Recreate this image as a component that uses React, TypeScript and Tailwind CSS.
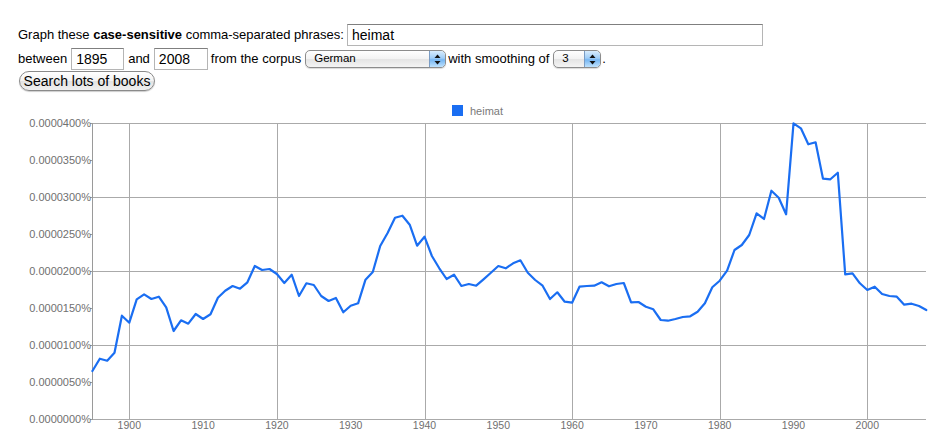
import React from "react";

const ys: number[] = [
  371, 358.7, 360.7, 352.7, 315.7, 322.7, 299.3, 294.3, 299, 296.7,
  307.3, 331, 320.3, 323.7, 314, 319, 314.3, 297.7, 290.7, 286,
  288.7, 282.3, 266, 270, 269, 274, 283, 274.7, 296, 283.3,
  285, 296, 301, 298, 312.3, 305.7, 303.3, 279.7, 272, 246,
  233, 217.7, 215.7, 224.7, 245.7, 236.7, 256, 268.3, 279, 274.7,
  286, 284, 285.7, 279.3, 272.7, 266, 268.3, 263.3, 260.3, 272.7,
  280, 285.7, 299, 292.3, 301.7, 302.7, 286.7, 286, 285.7, 282.3,
  286.3, 284, 283, 302.3, 302, 306.7, 309.3, 320, 320.7, 319,
  317, 316.3, 311.7, 303.3, 287.3, 280.7, 270.7, 250, 245, 235,
  213.3, 219, 190.7, 197.7, 214.3, 123.3, 128.3, 144.3, 142.3, 178.7,
  179.3, 172.7, 274.3, 273.3, 283.3, 290, 286.7, 294, 296, 296.7,
  304.7, 303.7, 306, 310,
];

const X0 = 92.4;
const PX = 7.38;
const xOf = (yr: number) => X0 + (yr - 1895) * PX;
const LEFT = 92;
const RIGHT = 926;
const TOP = 123;
const BOTTOM = 419;

function Arrows() {
  return (
    <div className="flex h-full w-[16px] items-center justify-center rounded-r-[4px] border-l border-[#7a9cc4] bg-[linear-gradient(#d8ecfd,#9fcdf7_45%,#76b6f2_55%,#bfe2fd)]">
      <svg width="7" height="11" viewBox="0 0 7 11">
        <polygon points="3.5,0.5 6.5,4 0.5,4" fill="#111" />
        <polygon points="0.5,7 6.5,7 3.5,10.5" fill="#111" />
      </svg>
    </div>
  );
}

function Select({ value, width }: { value: string; width: number }) {
  return (
    <div
      className="flex h-[18px] shrink-0 items-stretch overflow-hidden rounded-[5px] border border-[#8c8c8c] bg-[linear-gradient(#ffffff,#f3f3f3_50%,#e4e4e4_51%,#f4f4f4)] shadow-[0_1px_1px_rgba(0,0,0,0.15)]"
      style={{ width }}
    >
      <div className="flex flex-1 items-center pl-[8px] text-[11.5px] leading-none text-black">{value}</div>
      <Arrows />
    </div>
  );
}

export default function App() {
  const pts = ys.map((y, i) => `${xOf(1895 + i).toFixed(1)},${y}`).join(" ");
  const hGrid = [123, 197, 271, 345, 419];
  const yLabels = [
    "0.0000400%", "0.0000350%", "0.0000300%", "0.0000250%", "0.0000200%",
    "0.0000150%", "0.0000100%", "0.0000050%", "0.0000000%",
  ];
  const vGrid = [1900, 1920, 1940, 1960, 1980, 2000];
  const xLabels = [1900, 1910, 1920, 1930, 1940, 1950, 1960, 1970, 1980, 1990, 2000];

  return (
    <div className="h-[439px] w-[950px] overflow-hidden bg-white font-['Liberation_Sans',Arial,sans-serif] text-[13px] text-black">
      <div className="flex flex-col pl-[18px] pt-[24px]">
        <div className="flex h-[22px] items-center gap-[4px] whitespace-nowrap">
          <span className="w-[325px] shrink-0">
            Graph these <b>case-sensitive</b> comma-separated phrases:
          </span>
          <div className="flex h-[22px] w-[416px] shrink-0 items-center border border-[#b5b5b5] border-t-[#7f7f7f] pl-[4px] text-[14px]">
            heimat
          </div>
        </div>
        <div className="mt-[2px] flex h-[22px] items-center gap-[4px] whitespace-nowrap">
          <span>between</span>
          <div className="flex h-[22px] w-[53px] shrink-0 items-center border border-[#b5b5b5] border-t-[#7f7f7f] pl-[4px] text-[14px]">
            1895
          </div>
          <span>and</span>
          <div className="flex h-[22px] w-[54px] shrink-0 items-center border border-[#b5b5b5] border-t-[#7f7f7f] pl-[4px] text-[14px]">
            2008
          </div>
          <span className="-ml-[1px]">from the corpus</span>
          <Select value="German" width={141} />
          <span className="-ml-[2px]">with smoothing of</span>
          <Select value="3" width={48} />
          <span className="-ml-[3px]">.</span>
        </div>
        <div className="mt-[1px] flex">
          <div className="ml-[1px] flex h-[20px] w-[136px] items-center justify-center rounded-full border border-[#8a8a8a] bg-[linear-gradient(#ffffff,#f2f2f2_50%,#e2e2e2_51%,#f0f0f0)] text-[14px] shadow-[0_1px_1px_rgba(0,0,0,0.2)]">
            Search lots of books
          </div>
        </div>
      </div>

      <svg
        className="mt-[4px] block"
        width="950"
        height="344"
        viewBox="0 95 950 344"
        fontFamily="'Liberation Sans', Arial, sans-serif"
      >
        <rect x="452" y="105" width="11" height="11" fill="#1a6ef2" />
        <text x="470" y="114.5" fontSize="11" fill="#7a7a7a">heimat</text>

        {hGrid.map((y) => (
          <line key={y} x1={LEFT} x2={RIGHT} y1={y + 0.5} y2={y + 0.5} stroke="#aaaaaa" strokeWidth="1" />
        ))}
        {vGrid.map((yr) => (
          <line key={yr} x1={Math.round(xOf(yr)) + 0.5} x2={Math.round(xOf(yr)) + 0.5} y1={TOP} y2={BOTTOM} stroke="#aaaaaa" strokeWidth="1" />
        ))}
        <line x1={LEFT + 0.5} x2={LEFT + 0.5} y1={TOP} y2={BOTTOM + 1} stroke="#9a9a9a" strokeWidth="1" />
        {yLabels.map((l, i) => {
          const y = TOP + i * 37;
          return (
            <g key={l}>
              <line x1={LEFT - 2} x2={LEFT} y1={y + 0.5} y2={y + 0.5} stroke="#9a9a9a" />
              <text x={LEFT - 1} y={y + 4} fontSize="11" fill="#707070" textAnchor="end">
                {l}
              </text>
            </g>
          );
        })}
        {xLabels.map((yr) => (
          <text key={yr} x={xOf(yr)} y={429} fontSize="10.5" fill="#707070" textAnchor="middle">
            {yr}
          </text>
        ))}

        <polyline points={pts} fill="none" stroke="#1a6ef2" strokeWidth="2.2" strokeLinejoin="round" strokeLinecap="round" />
      </svg>
    </div>
  );
}
